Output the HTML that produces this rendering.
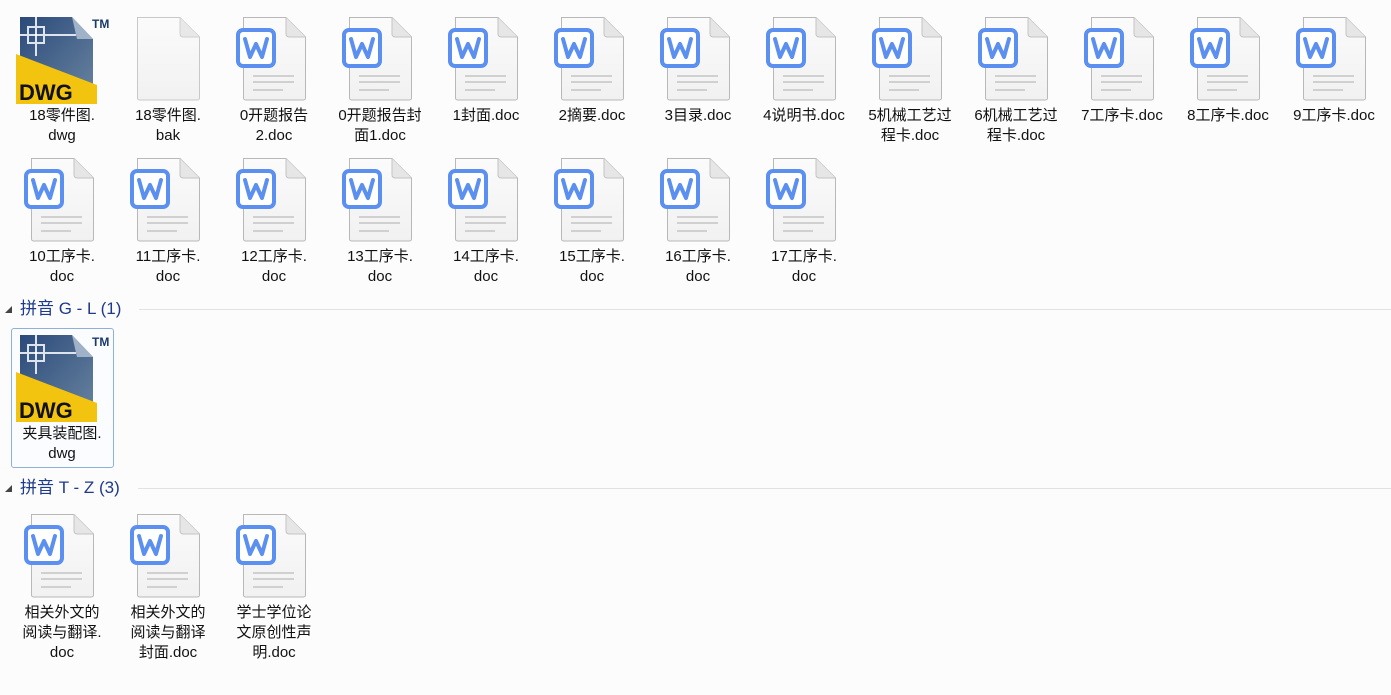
<!DOCTYPE html>
<html><head><meta charset="utf-8"><style>
body{margin:0;width:1391px;height:695px;background:#fcfcfc;position:relative;overflow:hidden;font-family:"Liberation Sans","Noto Sans CJK SC",sans-serif;}
.c{position:absolute;width:102px;text-align:center;font-size:15px;line-height:20px;color:#111;}
.c svg{display:block;margin:0 auto;overflow:hidden;}
.c svg.w{margin:0 -10px 0 -9px;}
.c div{margin-top:2px;}
.h{position:absolute;left:0;width:1391px;height:24px;}
.h .t{position:absolute;left:20px;top:0;font-size:17px;color:#1e3a8a;line-height:24px;}
.h .tri{position:absolute;left:5px;top:9px;width:0;height:0;border-left:7px solid transparent;border-bottom:7px solid #444;}
.h .ln{position:absolute;top:12px;height:1px;background:#e2e2e2;right:0;}
.sel{position:absolute;left:11px;top:328px;width:101px;height:138px;border:1px solid #8fb0d8;border-radius:3px;background:#fafcff;}
</style></head><body>
<svg width="0" height="0" style="position:absolute">
<defs>
<linearGradient id="pg" x1="0" y1="0" x2="0" y2="1"><stop offset="0" stop-color="#fbfbfb"/><stop offset="1" stop-color="#f1f1f1"/></linearGradient>
<linearGradient id="bl" x1="0" y1="0" x2="1" y2="1"><stop offset="0" stop-color="#2a4a7a"/><stop offset="1" stop-color="#6a84a0"/></linearGradient>
<symbol id="doc" viewBox="0 0 80 90">
<path d="M9.5 3.5 H52 L71.5 23 V84 a2 2 0 0 1 -2 2 H11.5 a2 2 0 0 1 -2 -2 Z" fill="url(#pg)" stroke="#b8b8b8"/>
<path d="M52 3.5 V20 a3 3 0 0 0 3 3 H71.5" fill="#e6e6e6" stroke="#c4c4c4"/>
<rect x="4" y="16" width="36" height="36" rx="5" fill="#fff" stroke="#5b8ff0" stroke-width="4"/>
<path d="M11 25 L16 43 L22 30 L28 43 L33 25" fill="none" stroke="#5b8ff0" stroke-width="4" stroke-linejoin="round" stroke-linecap="round"/>
<rect x="19" y="61" width="41" height="2" fill="#d0d0d0"/>
<rect x="19" y="67" width="41" height="2" fill="#d0d0d0"/>
<rect x="19" y="75" width="30" height="2" fill="#d0d0d0"/>
</symbol>
<symbol id="dwg" viewBox="0 0 100 90">
<path d="M8 3 H60 L81 25 V88 H8 Z" fill="url(#bl)"/>
<path d="M60 3 L81 25 H65 Z" fill="#9fb2c8"/>
<rect x="16" y="13" width="16" height="16" fill="none" stroke="#dde4ee" stroke-width="2"/>
<path d="M24 3 V42 M8 21 H64" stroke="#dde4ee" stroke-width="2"/>
<rect x="23" y="20" width="2" height="2" fill="#fff"/>
<path d="M4 40 L85 71 V90 H4 Z" fill="#f2c40f"/>
<text x="7" y="86" font-family="Liberation Sans" font-weight="bold" font-size="22" fill="#111">DWG</text>
<text x="80" y="14" font-family="Liberation Sans" font-weight="bold" font-size="12" fill="#1a3a6a">TM</text>
</symbol>
<symbol id="bak" viewBox="0 0 80 90">
<path d="M9.5 3.5 H52 L71.5 23 V84 a2 2 0 0 1 -2 2 H11.5 a2 2 0 0 1 -2 -2 Z" fill="url(#pg)" stroke="#c8c8c8"/>
<path d="M52 3.5 V20 a3 3 0 0 0 3 3 H71.5" fill="#e8e8e8" stroke="#cfcfcf"/>
</symbol>
</defs></svg>

<div class="c" style="left:11px;top:14px"><svg width="100" height="90" style="margin-left:1px"><use href="#dwg"/></svg><div>18零件图.<br>dwg</div></div>
<div class="c" style="left:117px;top:14px"><svg width="80" height="90"><use href="#bak"/></svg><div>18零件图.<br>bak</div></div>
<div class="c" style="left:223px;top:14px"><svg width="80" height="90"><use href="#doc"/></svg><div>0开题报告<br>2.doc</div></div>
<div class="c" style="left:329px;top:14px"><svg width="80" height="90"><use href="#doc"/></svg><div>0开题报告封<br>面1.doc</div></div>
<div class="c" style="left:435px;top:14px"><svg width="80" height="90"><use href="#doc"/></svg><div>1封面.doc</div></div>
<div class="c" style="left:541px;top:14px"><svg width="80" height="90"><use href="#doc"/></svg><div>2摘要.doc</div></div>
<div class="c" style="left:647px;top:14px"><svg width="80" height="90"><use href="#doc"/></svg><div>3目录.doc</div></div>
<div class="c" style="left:753px;top:14px"><svg width="80" height="90"><use href="#doc"/></svg><div>4说明书.doc</div></div>
<div class="c" style="left:859px;top:14px"><svg width="80" height="90"><use href="#doc"/></svg><div>5机械工艺过<br>程卡.doc</div></div>
<div class="c" style="left:965px;top:14px"><svg width="80" height="90"><use href="#doc"/></svg><div>6机械工艺过<br>程卡.doc</div></div>
<div class="c" style="left:1071px;top:14px"><svg width="80" height="90"><use href="#doc"/></svg><div>7工序卡.doc</div></div>
<div class="c" style="left:1177px;top:14px"><svg width="80" height="90"><use href="#doc"/></svg><div>8工序卡.doc</div></div>
<div class="c" style="left:1283px;top:14px"><svg width="80" height="90"><use href="#doc"/></svg><div>9工序卡.doc</div></div>

<div class="c" style="left:11px;top:155px"><svg width="80" height="90"><use href="#doc"/></svg><div>10工序卡.<br>doc</div></div>
<div class="c" style="left:117px;top:155px"><svg width="80" height="90"><use href="#doc"/></svg><div>11工序卡.<br>doc</div></div>
<div class="c" style="left:223px;top:155px"><svg width="80" height="90"><use href="#doc"/></svg><div>12工序卡.<br>doc</div></div>
<div class="c" style="left:329px;top:155px"><svg width="80" height="90"><use href="#doc"/></svg><div>13工序卡.<br>doc</div></div>
<div class="c" style="left:435px;top:155px"><svg width="80" height="90"><use href="#doc"/></svg><div>14工序卡.<br>doc</div></div>
<div class="c" style="left:541px;top:155px"><svg width="80" height="90"><use href="#doc"/></svg><div>15工序卡.<br>doc</div></div>
<div class="c" style="left:647px;top:155px"><svg width="80" height="90"><use href="#doc"/></svg><div>16工序卡.<br>doc</div></div>
<div class="c" style="left:753px;top:155px"><svg width="80" height="90"><use href="#doc"/></svg><div>17工序卡.<br>doc</div></div>

<div class="h" style="top:297px"><div class="tri"></div><div class="t">拼音 G - L (1)</div><div class="ln" style="left:139px"></div></div>
<div class="sel"></div>
<div class="c" style="left:11px;top:332px"><svg width="100" height="90" style="margin-left:1px"><use href="#dwg"/></svg><div>夹具装配图.<br>dwg</div></div>

<div class="h" style="top:476px"><div class="tri"></div><div class="t">拼音 T - Z (3)</div><div class="ln" style="left:138px"></div></div>
<div class="c" style="left:11px;top:511px"><svg width="80" height="90"><use href="#doc"/></svg><div>相关外文的<br>阅读与翻译.<br>doc</div></div>
<div class="c" style="left:117px;top:511px"><svg width="80" height="90"><use href="#doc"/></svg><div>相关外文的<br>阅读与翻译<br>封面.doc</div></div>
<div class="c" style="left:223px;top:511px"><svg width="80" height="90"><use href="#doc"/></svg><div>学士学位论<br>文原创性声<br>明.doc</div></div>
</body></html>
